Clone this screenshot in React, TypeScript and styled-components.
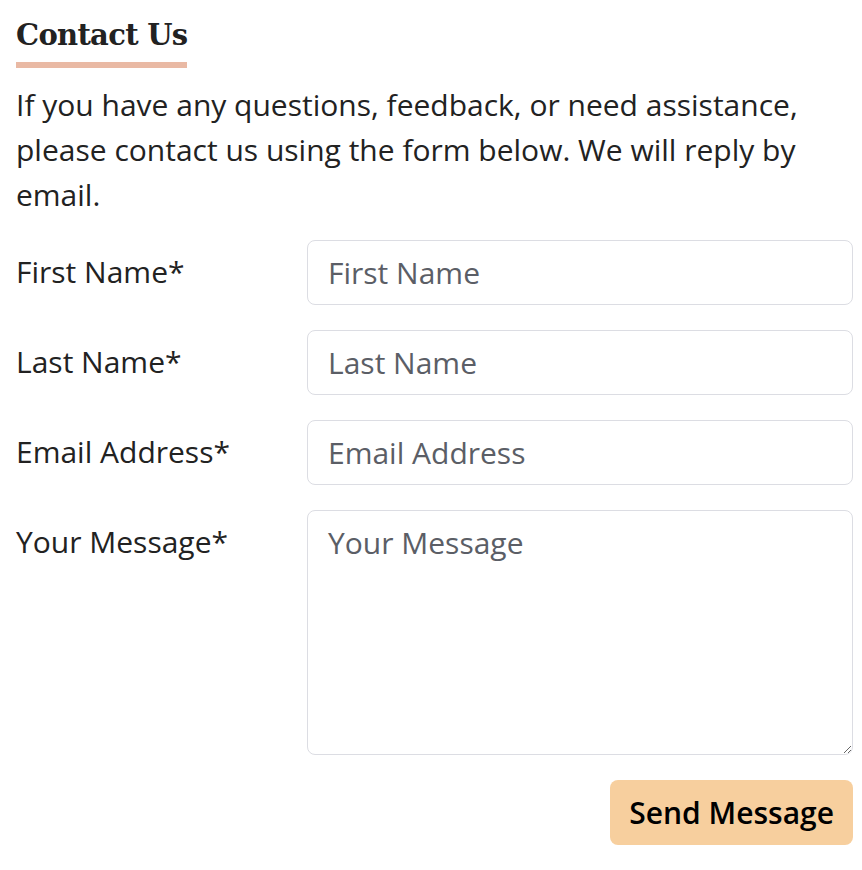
import styled, { createGlobalStyle } from 'styled-components'

const GlobalStyle = createGlobalStyle`
  html, body {
    margin: 0;
    padding: 0;
    background: #ffffff;
  }
  body {
    font-family: 'Open Sans', 'Liberation Sans', sans-serif;
    color: #222222;
  }
`

const Page = styled.div`
  width: 837px;
  padding: 13px 0 0 16px;
`

const Title = styled.h2`
  display: inline-block;
  margin: 0;
  padding-bottom: 5px;
  font-family: 'DejaVu Serif', 'Liberation Serif', serif;
  font-size: 29px;
  font-weight: 700;
  letter-spacing: -0.7px;
  line-height: 44px;
  color: #222222;
  border-bottom: 6px solid #e9b9a4;
`

const Intro = styled.p`
  margin: 14px 0 23px;
  font-size: 30px;
  line-height: 45px;
  color: #222222;
`

const Form = styled.form`
  display: grid;
  grid-template-columns: 291px 1fr;
  row-gap: 25px;
  align-items: start;
`

const Label = styled.label`
  font-size: 30px;
  line-height: 38px;
  padding-top: 13px;
  color: #222222;
`

const fieldCss = `
  box-sizing: border-box;
  width: 100%;
  margin: 0;
  padding: 11px 20px;
  font-family: 'Open Sans', 'Liberation Sans', sans-serif;
  font-size: 30px;
  line-height: 41px;
  color: #222222;
  background: #ffffff;
  border: 1px solid #dcdde3;
  border-radius: 8px;
  outline: none;

  &::placeholder {
    color: #5b5e66;
    opacity: 1;
  }
`

const Input = styled.input`
  ${fieldCss}
  height: 65px;
`

const TextArea = styled.textarea`
  ${fieldCss}
  display: block;
  height: 245px;
  resize: vertical;
`

const Actions = styled.div`
  grid-column: 2;
  display: flex;
  justify-content: flex-end;
`

const SendButton = styled.button`
  height: 65px;
  padding: 0 19px 0 19px;
  font-family: 'Open Sans', 'Liberation Sans', sans-serif;
  font-size: 30px;
  font-weight: 600;
  color: #000000;
  background: #f7cf9e;
  border: none;
  border-radius: 8px;
  cursor: pointer;
`

const fields = [
  { id: 'first', label: 'First Name*', placeholder: 'First Name', type: 'text' },
  { id: 'last', label: 'Last Name*', placeholder: 'Last Name', type: 'text' },
  { id: 'email', label: 'Email Address*', placeholder: 'Email Address', type: 'email' },
]

export default function App() {
  return (
    <>
      <GlobalStyle />
      <Page>
        <Title>Contact Us</Title>
        <Intro>
          If you have any questions, feedback, or need assistance, please contact us using the
          form below. We will reply by email.
        </Intro>
        <Form onSubmit={(e) => e.preventDefault()}>
          {fields.map((f) => [
            <Label key={f.id + '-label'} htmlFor={f.id}>{f.label}</Label>,
            <Input key={f.id} id={f.id} type={f.type} placeholder={f.placeholder} />,
          ])}
          <Label htmlFor="message">Your Message*</Label>
          <TextArea id="message" placeholder="Your Message" />
          <Actions>
            <SendButton type="submit">Send Message</SendButton>
          </Actions>
        </Form>
      </Page>
    </>
  )
}
